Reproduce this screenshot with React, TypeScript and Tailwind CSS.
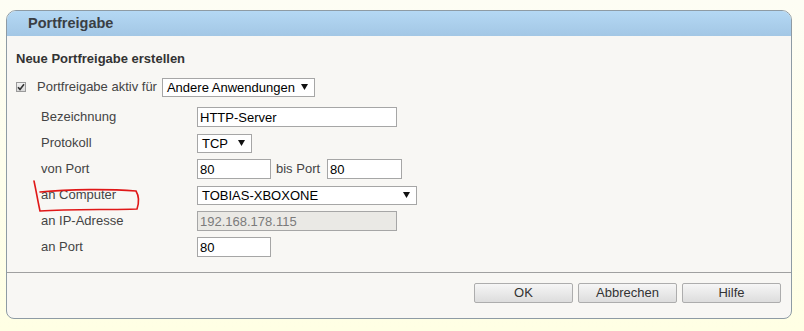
import React from 'react';

const font = "font-['Liberation_Sans',Arial,sans-serif]";

function Arrow() {
  return (
    <svg width="7" height="6" viewBox="0 0 7 6" className="shrink-0">
      <path d="M0 0h7L3.5 6z" fill="#111" />
    </svg>
  );
}

function Select({ value, className = '' }: { value: string; className?: string }) {
  return (
    <div
      className={`flex h-[19px] items-center justify-between border border-[#a6a6a6] bg-white pl-[4px] pr-[6px] text-[13px] leading-none text-black ${className}`}
    >
      <span>{value}</span>
      <Arrow />
    </div>
  );
}

function Field({ value, className = '', disabled = false }: { value: string; className?: string; disabled?: boolean }) {
  return (
    <div
      className={`flex h-[20px] items-center border border-[#a6a6a6] pl-[2px] text-[13px] leading-none ${
        disabled ? 'bg-[#eae9e5] text-[#7b7b7b]' : 'bg-white text-black'
      } ${className}`}
    >
      {value}
    </div>
  );
}

function Row({ label, children }: { label: string; children: React.ReactNode }) {
  return (
    <div className="grid h-[26px] grid-cols-[156px_1fr] items-center">
      <span className="text-[13px] text-[#444]">{label}</span>
      <div className="flex items-center">{children}</div>
    </div>
  );
}

function Button({ label }: { label: string }) {
  return (
    <div className="flex h-[20px] w-[99px] items-center justify-center rounded-[2px] border border-[#adadad] bg-gradient-to-b from-[#f6f6f6] to-[#dddddd] text-[13px] text-[#333]">
      {label}
    </div>
  );
}

export default function App() {
  return (
    <div className={`relative h-[331px] w-[804px] bg-gradient-to-b from-[#fdfdf4] to-[#ffffe4] pl-[6px] pr-[12px] pt-[10px] ${font}`}>
      <div className="overflow-hidden rounded-t-[10px] rounded-b-[8px] border border-[#8e9ba4] bg-[#f8f7f4]">
        <div className="flex h-[25px] items-center bg-gradient-to-b from-[#b4d8f4] to-[#a3c7e5] pl-[21px]">
          <span className="text-[14.5px] font-bold text-[#3a3e44]">Portfreigabe</span>
        </div>

        <div className="pb-[12px] pl-[9px] pt-[10px]">
          <div className="flex h-[26px] items-center text-[13px] font-bold text-[#333]">
            Neue Portfreigabe erstellen
          </div>
          <div className="mt-[2px] flex h-[26px] items-center text-[13px] text-[#444]">
            <div className="flex h-[10px] w-[10px] items-center justify-center border border-[#9a9a9a] bg-gradient-to-b from-[#f2f2f2] to-[#d9d9d9]">
              <svg width="8" height="8" viewBox="0 0 8 8">
                <path d="M1 4.2l2 2.2L7 1.2" fill="none" stroke="#333" strokeWidth="1.6" />
              </svg>
            </div>
            <span className="ml-[11px]">Portfreigabe aktiv für</span>
            <Select value="Andere Anwendungen" className="ml-[5px] w-[153px]" />
          </div>

          <div className="mt-[4px] pl-[25px]">
            <Row label="Bezeichnung">
              <Field value="HTTP-Server" className="w-[200px]" />
            </Row>
            <Row label="Protokoll">
              <Select value="TCP" className="w-[55px]" />
            </Row>
            <Row label="von Port">
              <Field value="80" className="w-[74px]" />
              <span className="ml-[5px] text-[13px] text-[#444]">bis Port</span>
              <Field value="80" className="ml-[7px] w-[75px]" />
            </Row>
            <Row label="an Computer">
              <Select value="TOBIAS-XBOXONE" className="w-[220px]" />
            </Row>
            <Row label="an IP-Adresse">
              <Field value="192.168.178.115" className="w-[200px]" disabled />
            </Row>
            <Row label="an Port">
              <Field value="80" className="w-[74px]" />
            </Row>
          </div>
        </div>

        <div className="flex justify-end gap-[5px] border-t border-[#a0a0a0] pb-[15px] pr-[10px] pt-[10px]">
          <Button label="OK" />
          <Button label="Abbrechen" />
          <Button label="Hilfe" />
        </div>
      </div>

      <svg className="pointer-events-none absolute left-[30px] top-[178px]" width="112" height="36" viewBox="0 0 112 36">
        <path
          d="M4 3 C6 12, 8 24, 10 33 C40 31, 80 32, 107 31 C109 25, 109 18, 106 13 C80 11, 40 11, 10 14"
          fill="none"
          stroke="#e01818"
          strokeWidth="1.6"
          strokeLinecap="round"
        />
      </svg>
    </div>
  );
}
